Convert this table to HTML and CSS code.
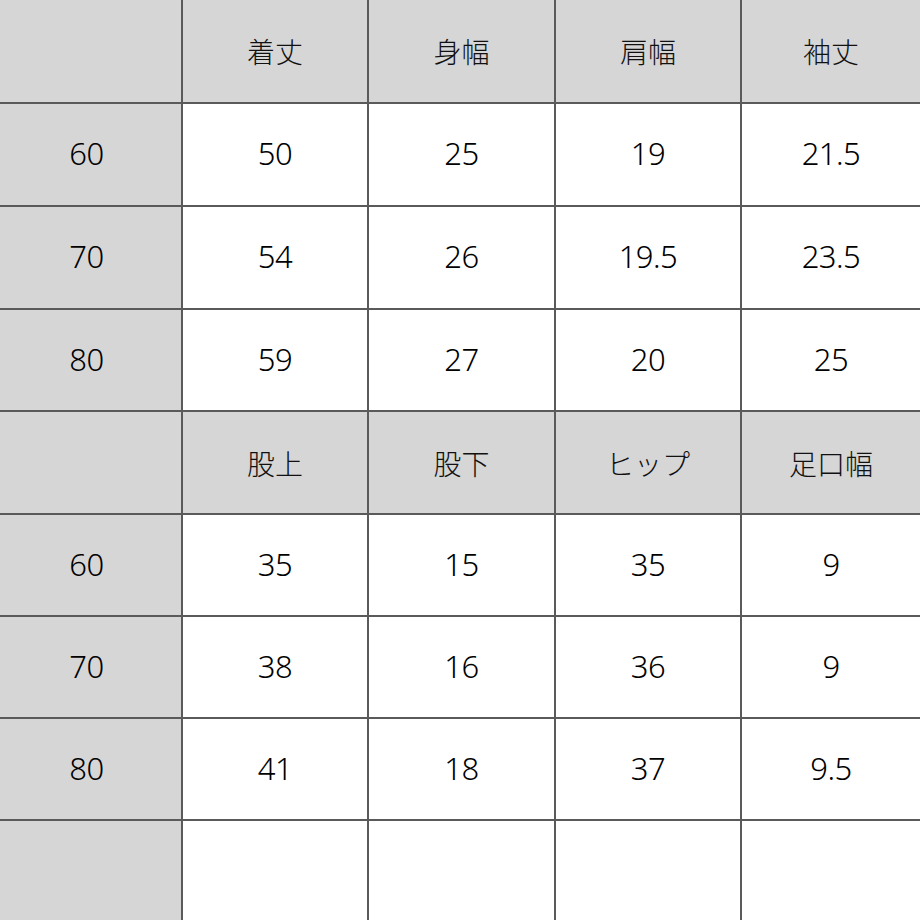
FILE: index.html
```html
<!DOCTYPE html>
<html lang="ja">
<head>
<meta charset="utf-8">
<link rel="stylesheet" href="styles.css">
</head>
<body>
<div class="sheet">
  <div class="c h first"></div><div class="c h jp">着丈</div><div class="c h jp">身幅</div><div class="c h jp">肩幅</div><div class="c h jp last">袖丈</div>
  <div class="c h first">60</div><div class="c">50</div><div class="c">25</div><div class="c">19</div><div class="c last">21.5</div>
  <div class="c h first">70</div><div class="c">54</div><div class="c">26</div><div class="c">19.5</div><div class="c last">23.5</div>
  <div class="c h first">80</div><div class="c">59</div><div class="c">27</div><div class="c">20</div><div class="c last">25</div>
  <div class="c h first"></div><div class="c h jp">股上</div><div class="c h jp">股下</div><div class="c h jp">ヒップ</div><div class="c h jp last">足口幅</div>
  <div class="c h first">60</div><div class="c">35</div><div class="c">15</div><div class="c">35</div><div class="c last">9</div>
  <div class="c h first">70</div><div class="c">38</div><div class="c">16</div><div class="c">36</div><div class="c last">9</div>
  <div class="c h first">80</div><div class="c">41</div><div class="c">18</div><div class="c">37</div><div class="c last">9.5</div>
  <div class="c h first bottom"></div><div class="c bottom"></div><div class="c bottom"></div><div class="c bottom"></div><div class="c bottom last"></div>
</div>
</body>
</html>
```
FILE: styles.css
```css
html, body {
  margin: 0;
  padding: 0;
  background: #fff;
}
.sheet {
  width: 920px;
  height: 920px;
  display: grid;
  grid-template-columns: 183px 186px 187px 186px 1fr;
  grid-template-rows: 104px 103px 103px 102px 103px 102px 102px 102px 1fr;
  overflow: hidden;
}
.c {
  box-sizing: border-box;
  border-right: 2px solid #5a5a5a;
  border-bottom: 2px solid #5a5a5a;
  display: flex;
  align-items: center;
  justify-content: center;
  padding-bottom: 3px;
  font-family: "Noto Sans", "Noto Sans CJK JP", sans-serif;
  font-size: 31px;
  font-weight: 300;
  letter-spacing: -0.5px;
  color: #000;
  background: #fff;
}
.h {
  background: #d6d6d6;
}
.first {
  padding-right: 8px;
}
.jp {
  font-family: "Noto Sans CJK JP", sans-serif;
  font-size: 28px;
  font-weight: 300;
  letter-spacing: 0;
  padding-bottom: 0;
  color: #111;
}
.last {
  border-right: none;
}
.bottom {
  border-bottom: none;
}
```
